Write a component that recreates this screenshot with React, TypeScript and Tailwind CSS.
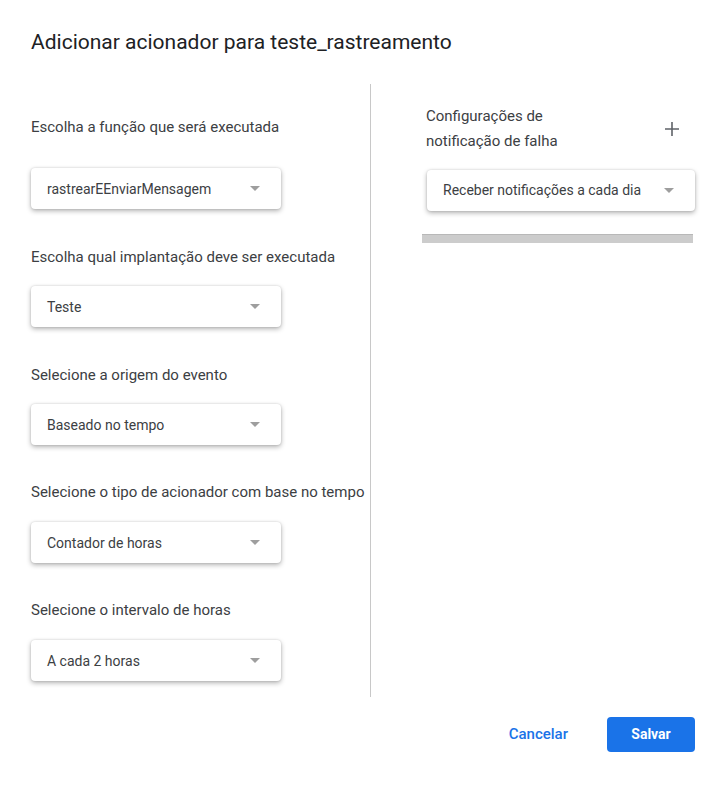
import React from "react";

function Select({ value, className = "" }: { value: string; className?: string }) {
  return (
    <div
      className={`flex h-[41px] items-center justify-between rounded-[4px] bg-white pl-4 pr-[21px] text-[14px] text-[#3c4043] shadow-[0_2px_5px_rgba(0,0,0,0.3),0_0_2px_rgba(0,0,0,0.15)] ${className}`}
    >
      <span>{value}</span>
      <svg width="10" height="5" viewBox="0 0 10 5" className="shrink-0">
        <path d="M0 0 L10 0 L5 5 Z" fill="#9e9e9e" />
      </svg>
    </div>
  );
}

export default function App() {
  return (
    <div
      className="relative h-[788px] w-[724px] bg-white"
      style={{ fontFamily: "Roboto, 'Liberation Sans', sans-serif" }}
    >
      <div className="pl-[31px] pt-[28px] text-[21px] leading-[28px] text-[#202124]">
        Adicionar acionador para teste_rastreamento
      </div>

      <div className="mt-[28px] flex">
        <div className="w-[370px] shrink-0 pl-[31px] text-[15px] leading-[20px] text-[#3c4043]">
          <div className="pt-[33px] whitespace-nowrap">Escolha a função que será executada</div>
          <Select value="rastrearEEnviarMensagem" className="mt-[31px] w-[250px]" />
          <div className="mt-[38px] whitespace-nowrap">Escolha qual implantação deve ser executada</div>
          <Select value="Teste" className="mt-[19px] w-[250px]" />
          <div className="mt-[38px] whitespace-nowrap">Selecione a origem do evento</div>
          <Select value="Baseado no tempo" className="mt-[19px] w-[250px]" />
          <div className="mt-[37px] whitespace-nowrap">Selecione o tipo de acionador com base no tempo</div>
          <Select value="Contador de horas" className="mt-[20px] w-[250px]" />
          <div className="mt-[37px] whitespace-nowrap">Selecione o intervalo de horas</div>
          <Select value="A cada 2 horas" className="mt-[20px] w-[250px]" />
          <div className="h-[16px]" />
        </div>
        <div className="w-px shrink-0 bg-[#c8c8c8]" />
        <div className="flex-1 pl-[51px] pr-[31px]">
          <div className="flex items-center justify-between pl-[4px] pt-[20px]">
            <div className="text-[15px] leading-[25px] text-[#3c4043]">
              Configurações de
              <br />
              notificação de falha
            </div>
            <svg width="14" height="14" viewBox="0 0 14 14" className="mr-[14px]">
              <path d="M7 0 V14 M0 7 H14" stroke="#5f6368" strokeWidth="1.6" />
            </svg>
          </div>
          <Select value="Receber notificações a cada dia" className="-mr-[2px] ml-[5px] mt-[16px]" />
          <div className="mt-[23px] h-[9px] border-t border-[#b8b8b8] bg-[#cccccc]" />
        </div>
      </div>

      <div className="mt-[20px] flex items-center justify-end pr-[29px]">
        <button className="mr-[39px] text-[15px] font-medium text-[#1a73e8]">Cancelar</button>
        <button className="h-[35px] w-[88px] rounded-[4px] bg-[#1a73e8] text-[14px] font-bold text-white">
          Salvar
        </button>
      </div>
    </div>
  );
}
